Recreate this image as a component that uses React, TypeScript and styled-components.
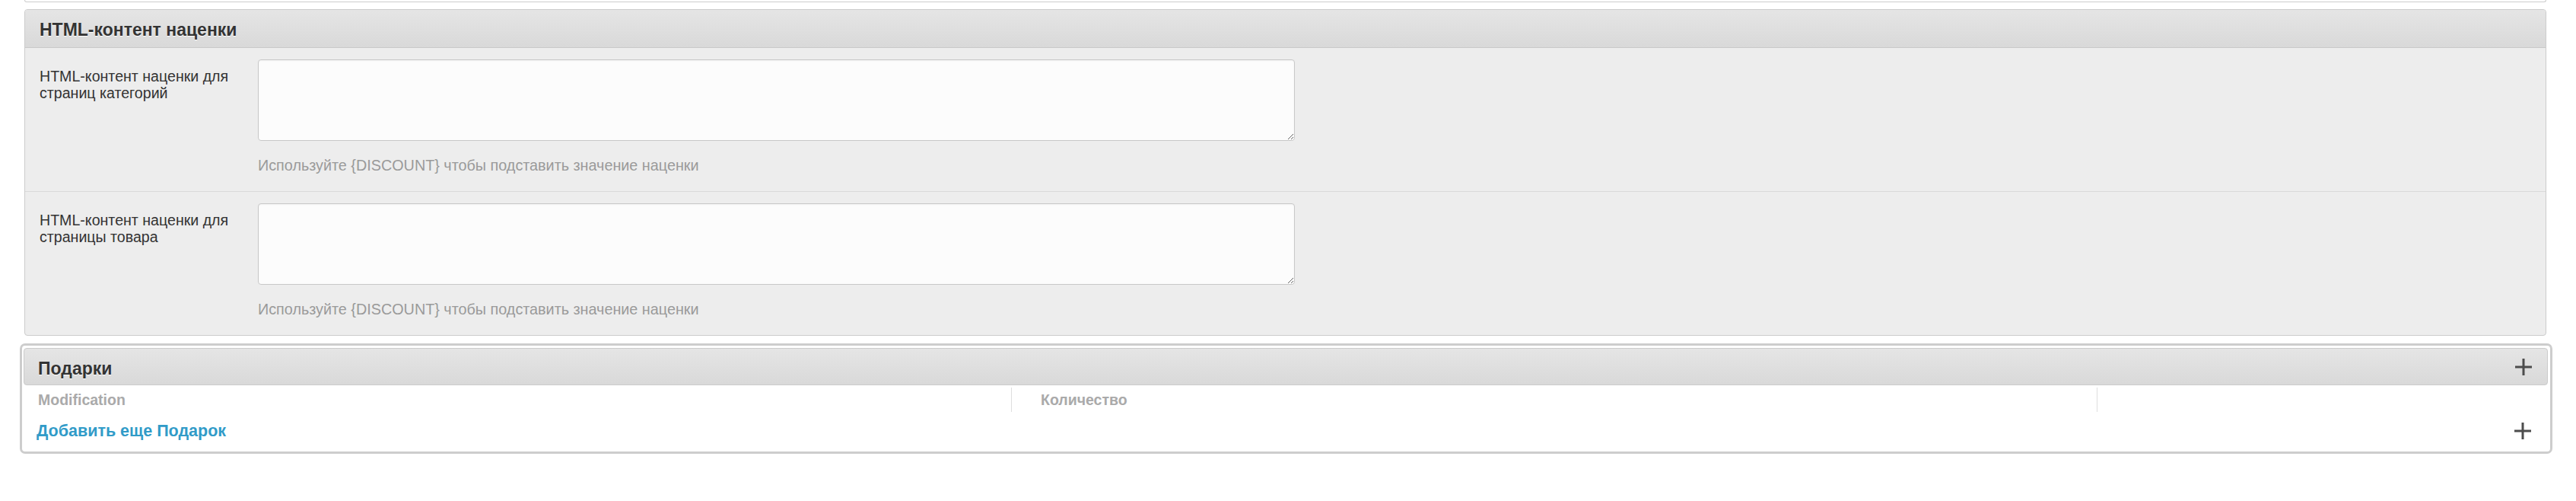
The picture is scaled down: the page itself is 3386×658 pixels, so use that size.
import React from 'react'
import styled, { createGlobalStyle } from 'styled-components'

const GlobalStyle = createGlobalStyle`
    body {
        margin: 0;
        background: #fff;
        font-family: "Liberation Sans", Arial, Helvetica, sans-serif;
        color: #333;
    }
`

const fields = [
    { label: 'HTML-контент наценки для страниц категорий' },
    { label: 'HTML-контент наценки для страницы товара' },
]

const PlusIcon = () => (
    <svg width="22" height="22" viewBox="0 0 22 22">
        <rect x="0" y="9.5" width="22" height="3" fill="#4d4d4d" />
        <rect x="9.5" y="0" width="3" height="22" fill="#4d4d4d" />
    </svg>
)

const App = () => {
    return (
        <Page>
            <GlobalStyle />
            <PrevPanel />

            <Panel>
                <PanelHeader>
                    <h3>HTML-контент наценки</h3>
                </PanelHeader>
                {fields.map((f, i) => (
                    <FieldRow key={i} last={i === fields.length - 1}>
                        <FieldLabel>{f.label}</FieldLabel>
                        <div>
                            <TextArea />
                            <HelpText>Используйте {'{DISCOUNT}'} чтобы подставить значение наценки</HelpText>
                        </div>
                    </FieldRow>
                ))}
            </Panel>

            <GiftBox>
                <PanelHeader rounded>
                    <h3>Подарки</h3>
                    <IconButton><PlusIcon /></IconButton>
                </PanelHeader>
                <TableHead>
                    <HeadCell>Modification</HeadCell>
                    <HeadCell divided indent>Количество</HeadCell>
                    <HeadCell divided />
                </TableHead>
                <Footer>
                    <AddLink href="#">Добавить еще Подарок</AddLink>
                    <IconButton><PlusIcon /></IconButton>
                </Footer>
            </GiftBox>
        </Page>
    )
}

export default App;

const Page = styled.div`
    padding: 0 39px 40px 32px;
`

const PrevPanel = styled.div`
    height: 2px;
    border: 1px solid #ccc;
    border-top: none;
    border-radius: 0 0 4px 4px;
    background: #fff;
`

const Panel = styled.div`
    margin-top: 9px;
    border: 1px solid #ccc;
    border-radius: 4px;
    background: #ededed;
    overflow: hidden;
`

const PanelHeader = styled.div<{ rounded?: boolean }>`
    display: flex;
    align-items: center;
    justify-content: space-between;
    height: ${({ rounded }) => (rounded ? '49px' : '50px')};
    box-sizing: border-box;
    padding: 0 20px 0 19px;
    background: linear-gradient(to bottom, #e5e5e5, #d9d9d9);
    border-bottom: 1px solid #c9c9c9;
    ${({ rounded }) => rounded && `
        border: 1px solid #cbcbcb;
        border-radius: 4px;
        padding-left: 18px;
    `}

    h3 {
        margin: ${({ rounded }) => (rounded ? '5px' : '2px')} 0 0;
        font-size: 23px;
        line-height: 26px;
        font-weight: bold;
        color: #333;
        text-shadow: 0 1px 0 #fff;
    }
`

const FieldRow = styled.div<{ last?: boolean }>`
    display: grid;
    grid-template-columns: 287px 1fr;
    padding: 15px 0 23px 19px;
    border-bottom: ${({ last }) => (last ? 'none' : '1px solid #dadada')};
`

const FieldLabel = styled.label`
    padding: 11px 20px 0 0;
    font-size: 19.6px;
    line-height: 22px;
    color: #333;
`

const TextArea = styled.textarea`
    display: block;
    box-sizing: border-box;
    width: 1363px;
    height: 107px;
    margin: 0;
    border: 1px solid #c8c8c8;
    border-radius: 4px;
    background: #fcfcfc;
    box-shadow: inset 0 1px 2px rgba(0, 0, 0, 0.05);
    font-family: inherit;
    font-size: 19.5px;
`

const HelpText = styled.p`
    margin: 21px 0 0;
    font-size: 19.8px;
    line-height: 22px;
    color: #9a9a9a;
`

const GiftBox = styled.div`
    margin: 10px -8px 0 -6px;
    border: 3px solid #cdcdcd;
    border-radius: 7px;
    padding: 3px 3px 3px 2px;
    background: #fff;
`

const IconButton = styled.span`
    display: flex;
    align-items: center;
    cursor: pointer;
`

const TableHead = styled.div`
    display: grid;
    grid-template-columns: 1298px 1427px 1fr;
    margin-top: 3px;
`

const HeadCell = styled.div<{ divided?: boolean; indent?: boolean }>`
    box-sizing: border-box;
    height: 32px;
    padding: 5px 0 0 ${({ indent }) => (indent ? '38px' : '19px')};
    border-left: ${({ divided }) => (divided ? '1px solid #dedede' : 'none')};
    font-size: 19.5px;
    line-height: 22px;
    font-weight: bold;
    color: #aaa;
`

const Footer = styled.div`
    display: flex;
    align-items: center;
    justify-content: space-between;
    height: 49px;
    padding: 0 22px 0 17px;
`

const AddLink = styled.a`
    font-size: 21.5px;
    line-height: 22px;
    font-weight: bold;
    color: #319bc8;
    text-decoration: none;
`
